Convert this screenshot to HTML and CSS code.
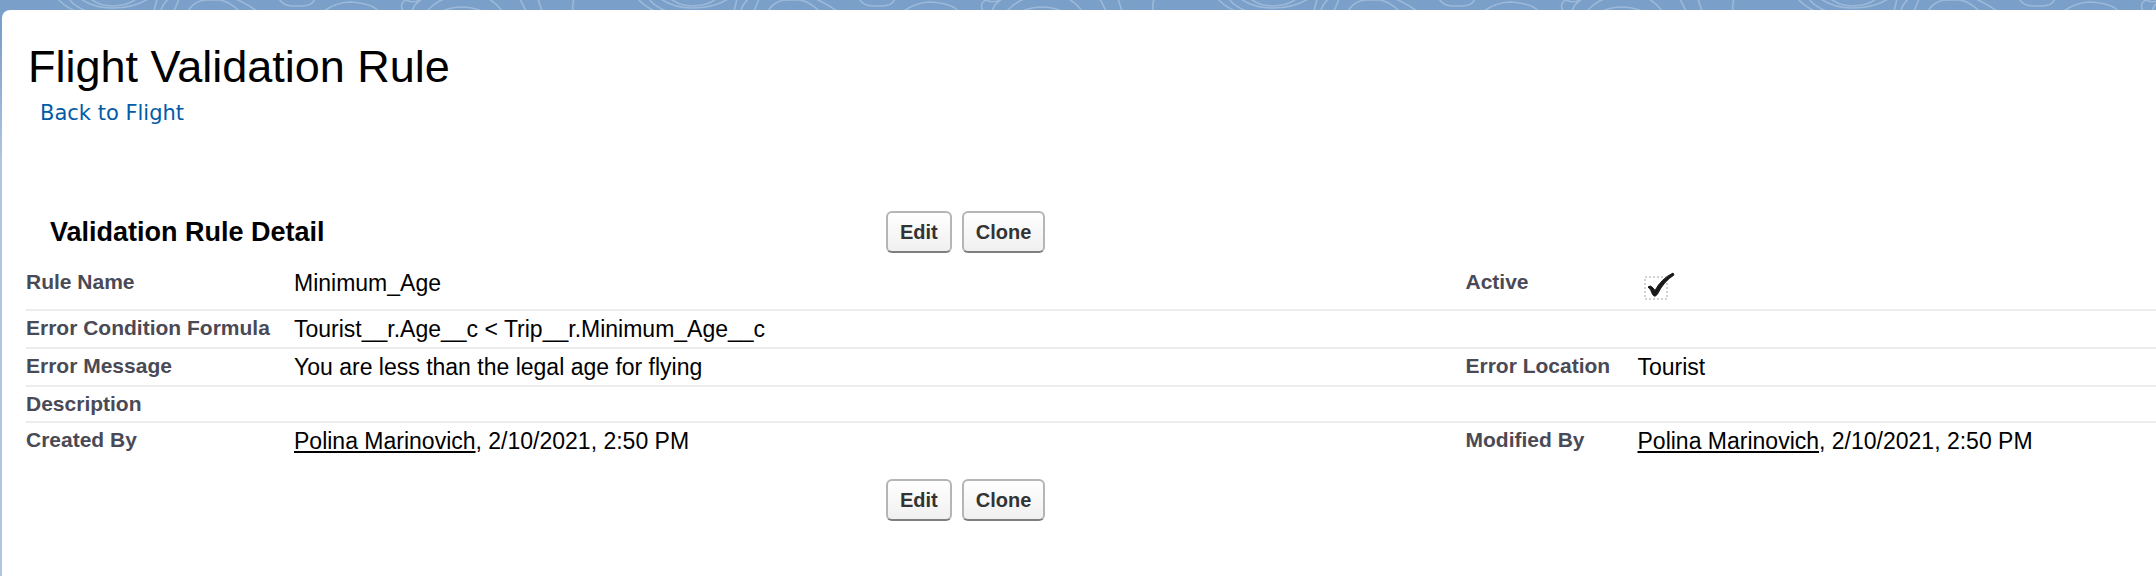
FILE: index.html
```html
<!DOCTYPE html>
<html lang="en">
<head>
<meta charset="utf-8">
<title>Flight Validation Rule</title>
<link rel="stylesheet" href="styles.css">
</head>
<body>
<svg class="topography" aria-hidden="true">
  <defs>
    <pattern id="contours" width="580" height="10" patternUnits="userSpaceOnUse">
      <g fill="none" stroke="#9cb9da" stroke-width="1.6">
        <path d="M58 -1Q64 6 75 11M69 -1Q74 6 86 11"/>
        <path d="M81 -1Q94 8 112 8Q134 8 148 -1M91 -1Q100 6 112 6Q127 6 136 -1"/>
        <path d="M157 -1L154 11M168 -1Q163 4 161 10M179 -1L174 11"/>
        <path d="M188 11Q195 0 207 0H220Q230 2 239 11M236 -1Q247 4 257 11"/>
        <path d="M279 -1Q284 6 292 6H302Q312 6 315 -1"/>
        <path d="M324 11Q335 3 349 2Q372 3 378 11"/>
        <path d="M403 11Q399 3 406 0Q414 4 422 -1Q414 4 412 11"/>
        <path d="M427 11Q434 3 444 -1M442 11Q462 3 482 11M489 -1Q497 4 502 11"/>
        <path d="M520 -1L526 11M538 -1L542 11M574 -1Q572 5 573 11"/>
      </g>
    </pattern>
  </defs>
  <rect width="100%" height="10" fill="url(#contours)"/>
</svg>
<main class="page">
  <header class="page-header">
    <h1 class="page-title">Flight Validation Rule</h1>
    <a class="back-link" href="#">Back to Flight</a>
  </header>
  <section class="detail" aria-labelledby="detail-title">
    <div class="toolbar">
      <h2 class="detail-title" id="detail-title">Validation Rule Detail</h2>
      <div class="actions">
        <button class="btn" type="button">Edit</button>
        <button class="btn" type="button">Clone</button>
      </div>
    </div>
    <table class="fields">
      <colgroup><col class="col-label"><col class="col-value"><col class="col-label-side"><col></colgroup>
      <tbody>
        <tr class="row-tall">
          <th scope="row">Rule Name</th><td>Minimum_Age</td>
          <th scope="row">Active</th>
          <td>
            <svg class="check" viewBox="2 -1 42 32" role="img" aria-label="Checked">
              <rect x="9" y="6" width="22" height="22" fill="none" stroke="#d2d2d2" stroke-width="2" stroke-dasharray="2 2"/>
              <path d="M12 16Q14.5 13.5 17 17L19 19.5Q25 8 37 2L38 4Q28 10 21.5 23Q19 27 16.5 23.5Q15 18 12 16Z" fill="#191919" stroke="#191919" stroke-width="1"/>
            </svg>
          </td>
        </tr>
        <tr><th scope="row">Error Condition Formula</th><td colspan="3">Tourist__r.Age__c &lt; Trip__r.Minimum_Age__c</td></tr>
        <tr>
          <th scope="row">Error Message</th><td>You are less than the legal age for flying</td>
          <th scope="row">Error Location</th><td>Tourist</td>
        </tr>
        <tr class="row-empty"><th scope="row">Description</th><td colspan="3"></td></tr>
        <tr>
          <th scope="row">Created By</th><td><a class="user" href="#">Polina Marinovich</a>, 2/10/2021, 2:50 PM</td>
          <th scope="row">Modified By</th><td><a class="user" href="#">Polina Marinovich</a>, 2/10/2021, 2:50 PM</td>
        </tr>
      </tbody>
    </table>
    <div class="toolbar toolbar-bottom">
      <div class="actions">
        <button class="btn" type="button">Edit</button>
        <button class="btn" type="button">Clone</button>
      </div>
    </div>
  </section>
</main>
</body>
</html>
```
FILE: styles.css
```css
* { box-sizing: border-box; }

body {
  display: flex;
  flex-direction: column;
  min-height: 100vh;
  margin: 0;
  background: linear-gradient(#7a9fc8, #7a9fc8 30px, #b0c4e4 160px);
  color: #000;
  font: 23px/26px "Liberation Sans", Arial, sans-serif;
}

.topography {
  display: block;
  width: 100%;
  height: 10px;
}

.page {
  flex: 1;
  margin-left: 2px;
  padding: 31px 0 24px 24px;
  border-top-left-radius: 8px;
  background: #fff;
}

.page-title {
  margin: 0 0 6px 2px;
  font-size: 45px;
  font-weight: 400;
  line-height: 52px;
}

.back-link {
  display: inline-block;
  margin-left: 14px;
  color: #015ba7;
  font: 21px/26px "DejaVu Sans", Verdana, sans-serif;
  text-decoration: none;
}

.detail { margin-top: 85px; }

.toolbar {
  display: grid;
  grid-template-columns: 860px 1fr;
  align-items: center;
}

.toolbar-bottom { margin-top: 18px; }

.detail-title {
  margin: 0;
  padding-left: 24px;
  font-size: 27px;
  line-height: 30px;
}

.actions {
  display: flex;
  grid-column: 2;
  gap: 10px;
}

.btn {
  height: 42px;
  padding: 0 12px;
  border: 2px solid #b5b5b5;
  border-bottom-color: #7f7f7f;
  border-radius: 6px;
  background: linear-gradient(#fff, #f0f0f0);
  color: #333;
  font: bold 20px/24px "Liberation Sans", Arial, sans-serif;
}

.fields {
  width: 100%;
  margin-top: 10px;
  border-collapse: separate;
  border-spacing: 0;
  table-layout: fixed;
}

.col-label { width: 268px; }
.col-value { width: 55%; }
.col-label-side { width: 172px; }

.fields th,
.fields td {
  height: 38px;
  padding: 5px 0;
  border-bottom: 2px solid #ececec;
  text-align: left;
  vertical-align: top;
}

.fields th {
  color: #4a4a56;
  font-size: 21px;
  line-height: 24px;
}

.fields .row-tall th,
.fields .row-tall td {
  height: 48px;
  padding-top: 7px;
}

.fields .row-empty th,
.fields .row-empty td { height: 36px; }

.fields tr:last-child th,
.fields tr:last-child td { border-bottom: 0; }

.check {
  display: block;
  width: 42px;
  height: 32px;
}

.user { color: inherit; }
```
